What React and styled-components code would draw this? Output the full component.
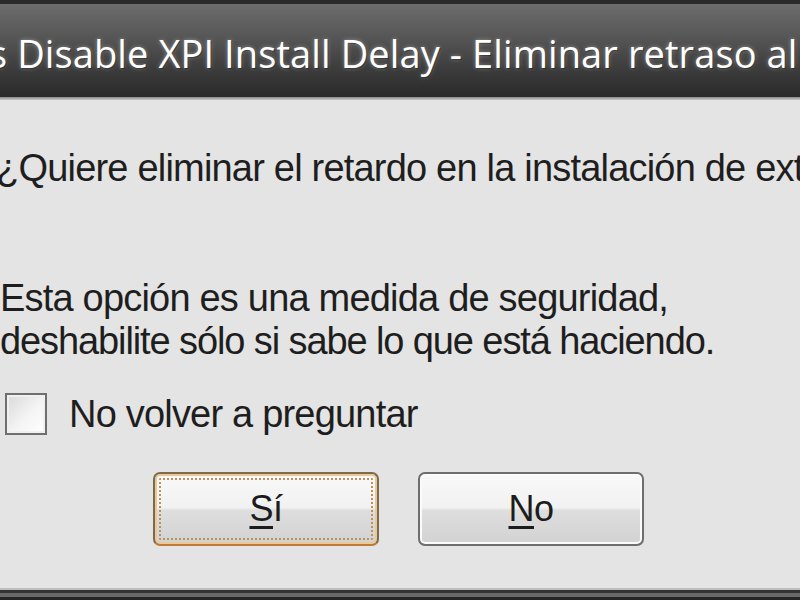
import React from "react";
import styled, { createGlobalStyle } from "styled-components";

const Global = createGlobalStyle`
  html, body {
    margin: 0;
    padding: 0;
    overflow: hidden;
    background: #2b2b2b;
  }
`;

const Window = styled.div`
  width: 800px;
  height: 600px;
  display: flex;
  flex-direction: column;
  overflow: hidden;
`;

const TopEdge = styled.div`
  height: 4px;
  background: #2a2a2a;
`;

const TitleBar = styled.div`
  height: 93px;
  display: flex;
  align-items: center;
  overflow: hidden;
  white-space: nowrap;
  background: linear-gradient(#6c6c6c 0%, #5a5a5a 30%, #3c3c3c 70%, #2a2a2a 100%);
`;

const Title = styled.span`
  margin-left: -11px;
  margin-top: 4px;
  font-family: "Open Sans", "DejaVu Sans", sans-serif;
  font-size: 38px;
  letter-spacing: 0.1px;
  color: #ffffff;
  text-shadow: 0 0 4px rgba(255, 255, 255, 0.4), 1px 1px 1px rgba(0, 0, 0, 0.6);
`;

const TitleRule = styled.div`
  height: 3px;
  background: linear-gradient(#8a8a8a, #c8c8c8);
`;

const Body = styled.div`
  flex: 1;
  display: flex;
  flex-direction: column;
  background: #e4e4e4;
  padding-top: 47px;
  font-family: "Liberation Sans", Arial, sans-serif;
  font-size: 38px;
  letter-spacing: -0.8px;
  line-height: 43px;
  color: #1e1e1e;
`;

const Line = styled.div`
  white-space: nowrap;
  margin-left: ${(p) => p.$indent || 0}px;
  margin-top: ${(p) => p.$gap || 0}px;
  letter-spacing: ${(p) => p.$tight || "inherit"};
`;

const CheckRow = styled.label`
  display: flex;
  align-items: center;
  gap: 22px;
  margin-top: 30px;
  margin-left: 5px;
  height: 42px;
`;

const Box = styled.span`
  width: 38px;
  height: 38px;
  border: 2px solid #6f6f6f;
  background: linear-gradient(135deg, #d9d9d9 0%, #f4f4f4 55%, #ffffff 100%);
  box-shadow: inset 0 0 0 2px #f0f0f0;
  flex: none;
`;

const Buttons = styled.div`
  display: flex;
  gap: 39px;
  margin-top: 37px;
  margin-left: 153px;
`;

const Button = styled.button`
  position: relative;
  width: 226px;
  height: 74px;
  padding: 0;
  border-radius: 7px;
  border: 2px solid ${(p) => (p.$default ? "#7d6a4a" : "#6e6e6e")};
  border-bottom-color: ${(p) => (p.$default ? "#c07a34" : "#6e6e6e")};
  background: linear-gradient(#f9f9f9 0%, #f1f1f1 48%, #dedede 52%, #d2d2d2 100%);
  box-shadow: inset 0 0 0 2px ${(p) => (p.$default ? "#e9c99a" : "#fbfbfb")};
  font-family: "Liberation Sans", Arial, sans-serif;
  font-size: 36px;
  letter-spacing: -0.5px;
  color: #1c1c1c;

  &::after {
    content: "";
    display: ${(p) => (p.$default ? "block" : "none")};
    position: absolute;
    inset: 4px;
    border: 2px dotted #b7925a;
    border-radius: 2px;
  }
`;

const Key = styled.span`
  text-decoration: underline;
  text-decoration-thickness: 3px;
  text-underline-offset: 5px;
`;

const BottomEdge = styled.div`
  height: 12px;
  background: linear-gradient(
    #bdbdbd 0px,
    #bdbdbd 2px,
    #333333 2px,
    #333333 5px,
    #6a6a6a 5px,
    #6a6a6a 9px,
    #262626 9px
  );
`;

export default function App() {
  return (
    <>
      <Global />
      <Window>
        <TopEdge />
        <TitleBar>
          <Title>s Disable XPI Install Delay - Eliminar retraso al instalar</Title>
        </TitleBar>
        <TitleRule />
        <Body>
          <Line $indent={-4}>¿Quiere eliminar el retardo en la instalación de extensiones?</Line>
          <Line $gap={87}>Esta opción es una medida de seguridad,</Line>
          <Line $tight="-1.1px">deshabilite sólo si sabe lo que está haciendo.</Line>
          <CheckRow>
            <Box />
            No volver a preguntar
          </CheckRow>
          <Buttons>
            <Button $default>
              <Key>S</Key>í
            </Button>
            <Button>
              <Key>N</Key>o
            </Button>
          </Buttons>
        </Body>
        <BottomEdge />
      </Window>
    </>
  );
}
